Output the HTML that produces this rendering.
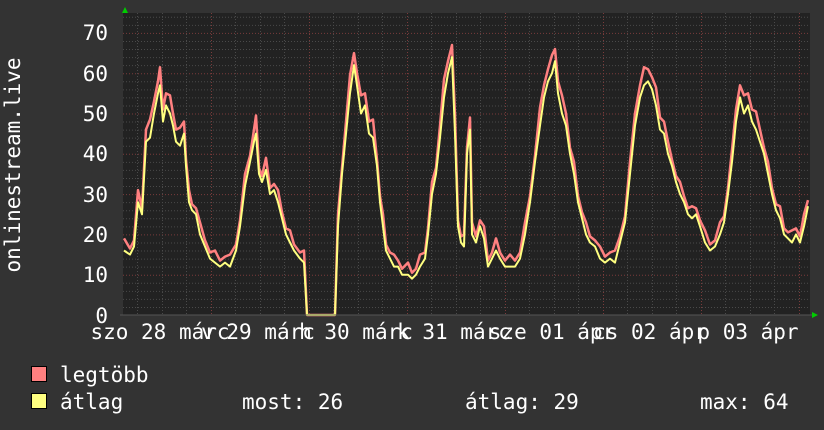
<!DOCTYPE html>
<html><head><meta charset="utf-8"><style>
html,body{margin:0;padding:0;background:#333;}
svg{display:block}
text{font-family:"DejaVu Sans Mono","Liberation Mono",monospace;fill:#fff;font-size:21px}
</style></head><body>
<svg id="s" width="824" height="430" xmlns="http://www.w3.org/2000/svg">
<rect width="824" height="430" fill="#333"/>
<rect x="123" y="13" width="687" height="302" fill="#222"/>
<g id="grid"></g>
<polyline id="red" fill="none" stroke="#ff8080" stroke-width="2.5" stroke-linejoin="round"/>
<polyline id="yel" fill="none" stroke="#ffff80" stroke-width="2" stroke-linejoin="round"/>
<line x1="120" y1="315" x2="812" y2="315" stroke="#555" stroke-width="1"/>
<polygon points="122,13 128,13 125,7" fill="#00cc00"/>
<polygon points="812,312 812,318 818,315" fill="#00cc00"/>
<g text-anchor="end">
<text x="108" y="40">70</text><text x="108" y="81">60</text><text x="108" y="121">50</text><text x="108" y="161">40</text><text x="108" y="202">30</text><text x="108" y="242">20</text><text x="108" y="282">10</text><text x="108" y="323">0</text>
</g>
<text transform="translate(20,165) rotate(-90)" text-anchor="middle">onlinestream.live</text>
<g id="xl" text-anchor="middle"></g>
<rect x="31.5" y="366.5" width="15" height="15" fill="#ff8080" stroke="#000"/>
<rect x="31.5" y="393.5" width="15" height="15" fill="#ffff80" stroke="#000"/>
<text x="60" y="382">legtöbb</text>
<text x="60" y="409">átlag</text>
<text x="242" y="409">most: 26</text>
<text x="465" y="409">átlag: 29</text>
<text x="700" y="409">max: 64</text>
</svg>
<script>
var NS="http://www.w3.org/2000/svg";
var g=document.getElementById('grid');
function ln(x1,y1,x2,y2,c){var l=document.createElementNS(NS,'line');l.setAttribute('x1',x1);l.setAttribute('y1',y1);l.setAttribute('x2',x2);l.setAttribute('y2',y2);l.setAttribute('stroke',c);l.setAttribute('stroke-dasharray','1,2');g.appendChild(l);}
function Y(v){return 315-v*4.03;}
for(var v=2;v<=74;v+=2){ln(123,Y(v)+.5,810,Y(v)+.5,v%10==0?'#7a3b3b':'#4a4a4a');}
for(var x=137;x<810;x+=24.5){var r=Math.abs(((x-210)/98)-Math.round((x-210)/98))<0.05;ln(Math.round(x)+.5,13,Math.round(x)+.5,315,r?'#7a3b3b':'#4a4a4a');}
var d=[124,16,130,15,134,17,138,28,142,25,146,43,150,44,154,50,158,55,160,57,163,48,166,52,170,50,173,47,176,43,180,42,184,45,186,37,189,28,192,26,196,25,200,20,205,17,210,14,215,13,220,12,225,13,230,12,236,16,240,22,245,32,250,38,254,43,256,45,259,35,262,33,266,36,270,30,274,31,278,28,282,24,286,20,290,18,294,16,300,14,304,13,307,0,335,0,338,22,342,35,346,45,350,55,354,62,357,57,361,50,365,52,369,45,373,44,377,37,380,28,383,22,386,16,390,14,394,12,398,12,402,10,408,10,412,9,416,10,420,12,425,14,428,20,432,30,436,35,440,44,444,54,448,60,452,64,455,45,458,22,461,18,464,17,467,40,470,46,472,20,476,18,480,22,484,19,488,12,492,14,496,16,500,14,505,12,510,12,515,12,520,14,525,20,530,28,535,38,540,47,544,54,548,58,552,60,555,63,558,55,562,50,566,47,570,40,574,35,578,28,582,24,586,20,590,18,595,17,600,14,605,13,610,14,615,13,620,18,625,23,630,35,635,47,640,54,644,57,648,58,652,56,656,52,660,46,664,45,668,40,672,37,676,33,680,30,684,28,688,25,692,24,696,25,700,22,705,18,710,16,715,17,720,20,724,23,728,30,732,38,736,48,740,54,744,50,748,52,752,48,756,46,760,43,764,40,768,35,772,30,776,26,780,24,784,20,788,19,792,18,796,20,800,18,804,22,808,27];
var py=[],pr=[];
for(var i=0;i<d.length;i+=2){var x=d[i],v=d[i+1];py.push(x+','+Y(v).toFixed(1));var o=v==0?0:(v>40?3:1.5)+((i/2)%3==0?1.5:0);pr.push(x+','+Y(v+o).toFixed(1));}
document.getElementById('yel').setAttribute('points',py.join(' '));
document.getElementById('red').setAttribute('points',pr.join(' '));
var labs=["szo 28 márc","v 29 márc","h 30 márc","k 31 márc","sze 01 ápr","cs 02 ápr","p 03 ápr"];
var xl=document.getElementById('xl');
labs.forEach(function(t,k){var e=document.createElementNS(NS,'text');e.setAttribute('x',160+98*k);e.setAttribute('y',339);e.textContent=t;xl.appendChild(e);});
</script>
</body></html>
